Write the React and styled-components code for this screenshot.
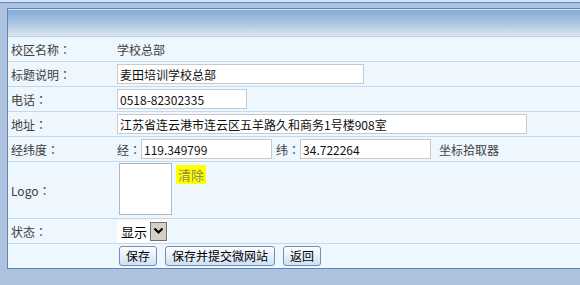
import React from "react";
import styled, { createGlobalStyle } from "styled-components";

const GlobalStyle = createGlobalStyle`
  html, body {
    margin: 0;
    padding: 0;
    background: #aec2dd;
    overflow: hidden;
  }
  body {
    font-family: "Noto Sans CJK SC", "Microsoft YaHei", sans-serif;
    font-size: 12px;
    color: #404040;
  }
`;

const TopLine = styled.div`
  height: 2px;
  background: #d9e3ef;
  border-bottom: 1px solid #4a8fdd;
`;

const Wrap = styled.div`
  padding: 5px 0 0 7px;
  height: 285px;
  box-sizing: border-box;
`;

const Panel = styled.div`
  width: 600px;
  border: 1px solid #5b86b9;
  background: #eef6fe;
`;

const Header = styled.div`
  height: 26px;
  border-top: 1px solid #d0e2f4;
  border-bottom: 1px solid #b8d2ec;
  background: linear-gradient(to bottom, #88add7 0%, #a9c3e0 50%, #dee6ee 100%);
`;

const Row = styled.div`
  display: grid;
  grid-template-columns: 105px 1fr;
  min-height: ${(p) => p.$h || 24}px;
  border-bottom: ${(p) => (p.$last ? "none" : "1px solid #c4d9ec")};
`;

const Label = styled.div`
  display: flex;
  align-items: center;
  padding-left: 3px;
  white-space: nowrap;
`;

/* full-width colon centred in its cell, as the original font draws it */
const Colon = styled.span`
  font-family: "Noto Sans CJK TC", "Noto Sans CJK SC", sans-serif;
`;

const Cell = styled.div`
  display: flex;
  align-items: ${(p) => (p.$top ? "flex-start" : "center")};
  gap: ${(p) => p.$gap || 0}px;
  padding-left: ${(p) => p.$pl ?? 4}px;
  padding-top: ${(p) => p.$pt || 0}px;
  white-space: nowrap;
`;

const Input = styled.input`
  box-sizing: border-box;
  width: ${(p) => p.$w}px;
  height: 20px;
  border: 1px solid #c9c9c9;
  background: #fff;
  padding: 0 2px;
  margin: 0;
  font-family: "Noto Sans CJK SC", "Microsoft YaHei", sans-serif;
  font-size: 12px;
  color: #111;
  outline: none;
`;

const Inline = styled.span`
  margin: 0 ${(p) => p.$r || 0}px 0 ${(p) => p.$l || 0}px;
`;

const LogoBox = styled.div`
  width: 51px;
  height: 50px;
  border: 1px solid #b7b7b7;
  background: #fff;
  margin-left: 2px;
`;

const ClearTag = styled.span`
  background: #ffff00;
  color: #8a8a5a;
  font-size: 13px;
  line-height: 19px;
  padding: 0 2px;
  margin-top: 2px;
`;

const SelectBox = styled.div`
  display: flex;
  align-items: center;
  width: 51px;
  height: 23px;
  background: #fff;
  box-sizing: border-box;
  padding-left: 4px;
  font-size: 13px;
  color: #000;
`;

const Arrow = styled.span`
  display: flex;
  align-items: center;
  justify-content: center;
  width: 17px;
  height: 19px;
  margin-left: auto;
  margin-right: 1px;
  box-sizing: border-box;
  background: #d4d0c8;
  border: 1px solid #707070;
`;

const Button = styled.button`
  height: 20px;
  padding: 0 6px;
  border: 1px solid #6b8fb8;
  border-radius: 3px;
  background: linear-gradient(to bottom, #ffffff 0%, #e6f0fa 50%, #cfe0f2 100%);
  font-family: "Noto Sans CJK SC", "Microsoft YaHei", sans-serif;
  font-size: 12px;
  line-height: 18px;
  color: #000;
`;

const App = () => {
  return (
    <>
      <GlobalStyle />
      <TopLine />
      <Wrap>
        <Panel>
          <Header />
          <Row>
            <Label>校区名称<Colon>：</Colon></Label>
            <Cell>学校总部</Cell>
          </Row>
          <Row>
            <Label>标题说明<Colon>：</Colon></Label>
            <Cell><Input $w={247} defaultValue="麦田培训学校总部" /></Cell>
          </Row>
          <Row>
            <Label>电话<Colon>：</Colon></Label>
            <Cell><Input $w={130} defaultValue="0518-82302335" /></Cell>
          </Row>
          <Row>
            <Label>地址<Colon>：</Colon></Label>
            <Cell><Input $w={410} defaultValue="江苏省连云港市连云区五羊路久和商务1号楼908室" /></Cell>
          </Row>
          <Row>
            <Label>经纬度<Colon>：</Colon></Label>
            <Cell>
              <Inline>经<Colon>：</Colon></Inline>
              <Input $w={131} defaultValue="119.349799" />
              <Inline $l={4}>纬<Colon>：</Colon></Inline>
              <Input $w={131} defaultValue="34.722264" />
              <Inline $l={8}>坐标拾取器</Inline>
            </Cell>
          </Row>
          <Row $h={56}>
            <Label>Logo<Colon>：</Colon></Label>
            <Cell $top $pt={1} $gap={4}>
              <LogoBox />
              <ClearTag>清除</ClearTag>
            </Cell>
          </Row>
          <Row>
            <Label>状态<Colon>：</Colon></Label>
            <Cell>
              <SelectBox>
                显示
                <Arrow>
                  <svg width="11" height="8" viewBox="0 0 11 8">
                    <path d="M1.5 1.5 L5.5 5.5 L9.5 1.5" fill="none" stroke="#000" strokeWidth="2.2" />
                  </svg>
                </Arrow>
              </SelectBox>
            </Cell>
          </Row>
          <Row $last>
            <Label />
            <Cell $pl={6} $gap={8}>
              <Button>保存</Button>
              <Button>保存并提交微网站</Button>
              <Button>返回</Button>
            </Cell>
          </Row>
        </Panel>
      </Wrap>
    </>
  );
};

export default App;
